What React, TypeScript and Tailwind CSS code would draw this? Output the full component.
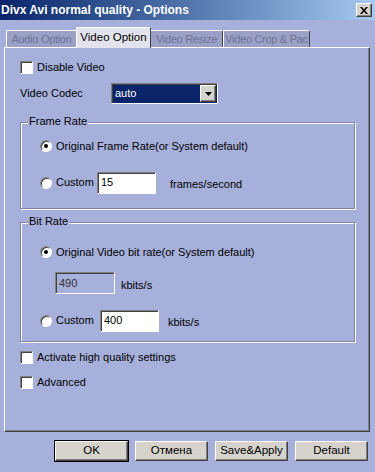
import React from 'react';

const raised =
  'border border-t-white border-l-white border-r-[#404040] border-b-[#404040] shadow-[inset_-1px_-1px_0_#808080]';
const sunken =
  'border border-t-[#808080] border-l-[#808080] border-r-white border-b-white shadow-[inset_1px_1px_0_#404040]';

function Checkbox({ label }: { label: string }) {
  return (
    <div className="flex h-[13px] items-center">
      <span className={`h-[13px] w-[13px] shrink-0 bg-white ${sunken}`} />
      <span className="ml-[4px] leading-none">{label}</span>
    </div>
  );
}

function Radio({ checked }: { checked?: boolean }) {
  return (
    <span className="flex h-[12px] w-[12px] shrink-0 items-center justify-center rounded-full border border-t-[#808080] border-l-[#808080] border-r-white border-b-white bg-white shadow-[inset_1px_1px_0_#404040]">
      {checked ? <span className="h-[4px] w-[4px] rounded-full bg-black" /> : null}
    </span>
  );
}

function Field({ value, width, disabled }: { value: string; width: string; disabled?: boolean }) {
  return (
    <div
      className={`flex h-[22px] items-center pl-[3px] ${width} ${sunken} ${disabled ? 'bg-[#a7b0db] text-[#303030]' : 'bg-white'}`}
    >
      {value}
    </div>
  );
}

function Group({ title, className, children }: { title: string; className: string; children: React.ReactNode }) {
  return (
    <div
      className={`relative mr-[14px] border border-[#7f84a8] shadow-[inset_1px_1px_0_white,1px_1px_0_white] ${className}`}
    >
      <span className="absolute -top-[7px] left-[7px] bg-[#a7b0db] px-[1px] leading-none">{title}</span>
      {children}
    </div>
  );
}

function DialogButton({ label, isDefault }: { label: string; isDefault?: boolean }) {
  return (
    <div className={isDefault ? 'border border-black' : 'border border-transparent'}>
      <div className={`flex h-[20px] w-[73px] items-center justify-center bg-[#d6d3cc] text-[11.5px] ${raised}`}>
        {label}
      </div>
    </div>
  );
}

export default function App() {
  const tabs = [
    { label: 'Audio Option', w: 'w-[71px]' },
    { label: 'Video Option', w: 'w-[75px]', active: true },
    { label: 'Video Resize', w: 'w-[73px]' },
    { label: 'Video Crop & Pac', w: 'w-[87px]' },
  ];

  return (
    <div className="flex h-[472px] w-[375px] flex-col overflow-hidden bg-[#a7b0db] font-['Liberation_Sans',Arial,sans-serif] text-[11px] text-black">
      <div className="flex h-[20px] items-center bg-gradient-to-r from-[#0a246a] to-[#a6caf0] pl-[1px] pr-[3px]">
        <span className="flex-1 text-[12px] font-bold text-white">Divx Avi normal quality - Options</span>
        <span className={`flex h-[14px] w-[16px] items-center justify-center bg-[#d6d3cc] ${raised}`}>
          <svg width="8" height="7" viewBox="0 0 8 7">
            <path d="M0 0h2l2 2.5L6 0h2L5 3.5 8 7H6L4 4.5 2 7H0l3-3.5z" fill="black" />
          </svg>
        </span>
      </div>

      <div className="mt-[7px] flex h-[20px] items-end pl-[6px]">
        {tabs.map((t) =>
          t.active ? (
            <div
              key={t.label}
              className={`relative z-10 -mx-[1px] -mb-[1px] flex h-[21px] items-center justify-center rounded-t-[2px] border border-b-0 border-t-white border-l-white border-r-[#404040] bg-[#e2e3ec] text-[11.5px] ${t.w}`}
            >
              {t.label}
            </div>
          ) : (
            <div
              key={t.label}
              className={`flex h-[17px] items-center justify-center whitespace-nowrap rounded-t-[2px] border border-b-0 border-t-white border-l-white border-r-[#404040] bg-[#9aa0c6] text-[11px] tracking-[-0.3px] text-[#6e7396] ${t.w}`}
            >
              {t.label}
            </div>
          ),
        )}
      </div>

      <div className="ml-[4px] flex h-[385px] w-[366px] flex-col border border-t-white border-l-white border-r-[#404040] border-b-[#404040] pl-[15px] shadow-[inset_-1px_-1px_0_#808080]">
        <div className="mt-[13px]">
          <Checkbox label="Disable Video" />
        </div>

        <div className="mt-[9px] flex h-[21px] items-center">
          <span className="w-[91px]">Video Codec</span>
          <div className={`flex h-[21px] w-[107px] items-center bg-[#0a246a] pl-[3px] pr-[1px] text-white ${sunken}`}>
            <span className="flex-1">auto</span>
            <span className={`flex h-[17px] w-[16px] items-center justify-center bg-[#d6d3cc] ${raised}`}>
              <svg width="7" height="4" viewBox="0 0 7 4">
                <path d="M0 0h7L3.5 4z" fill="black" />
              </svg>
            </span>
          </div>
        </div>

        <Group title="Frame Rate" className="mt-[18px] h-[87px]">
          <div className="ml-[19px] mt-[15px] flex items-center">
            <Radio checked />
            <span className="ml-[4px]">Original Frame Rate(or System default)</span>
          </div>
          <div className="ml-[19px] mt-[17px] flex h-[22px] items-center">
            <Radio />
            <span className="ml-[4px] w-[41px]">Custom</span>
            <Field value="15" width="w-[59px]" />
            <span className="ml-[14px] mt-[4px]">frames/second</span>
          </div>
        </Group>

        <Group title="Bit Rate" className="mt-[13px] h-[120px]">
          <div className="ml-[19px] mt-[21px] flex items-center">
            <Radio checked />
            <span className="ml-[4px]">Original Video bit rate(or System default)</span>
          </div>
          <div className="ml-[34px] mt-[11px] flex h-[23px] items-center">
            <Field value="490" width="w-[60px]" disabled />
            <span className="ml-[6px] mt-[4px]">kbits/s</span>
          </div>
          <div className="ml-[19px] mt-[15px] flex h-[22px] items-center">
            <Radio />
            <span className="ml-[4px] w-[44px]">Custom</span>
            <Field value="400" width="w-[59px]" />
            <span className="ml-[9px] mt-[4px]">kbits/s</span>
          </div>
        </Group>

        <div className="mt-[9px]">
          <Checkbox label="Activate high quality settings" />
        </div>
        <div className="mt-[12px]">
          <Checkbox label="Advanced" />
        </div>
      </div>

      <div className="mt-[8px] flex justify-end gap-[5px] pr-[6px]">
        <DialogButton label="OK" isDefault />
        <DialogButton label="Отмена" />
        <DialogButton label="Save&Apply" />
        <DialogButton label="Default" />
      </div>
    </div>
  );
}
